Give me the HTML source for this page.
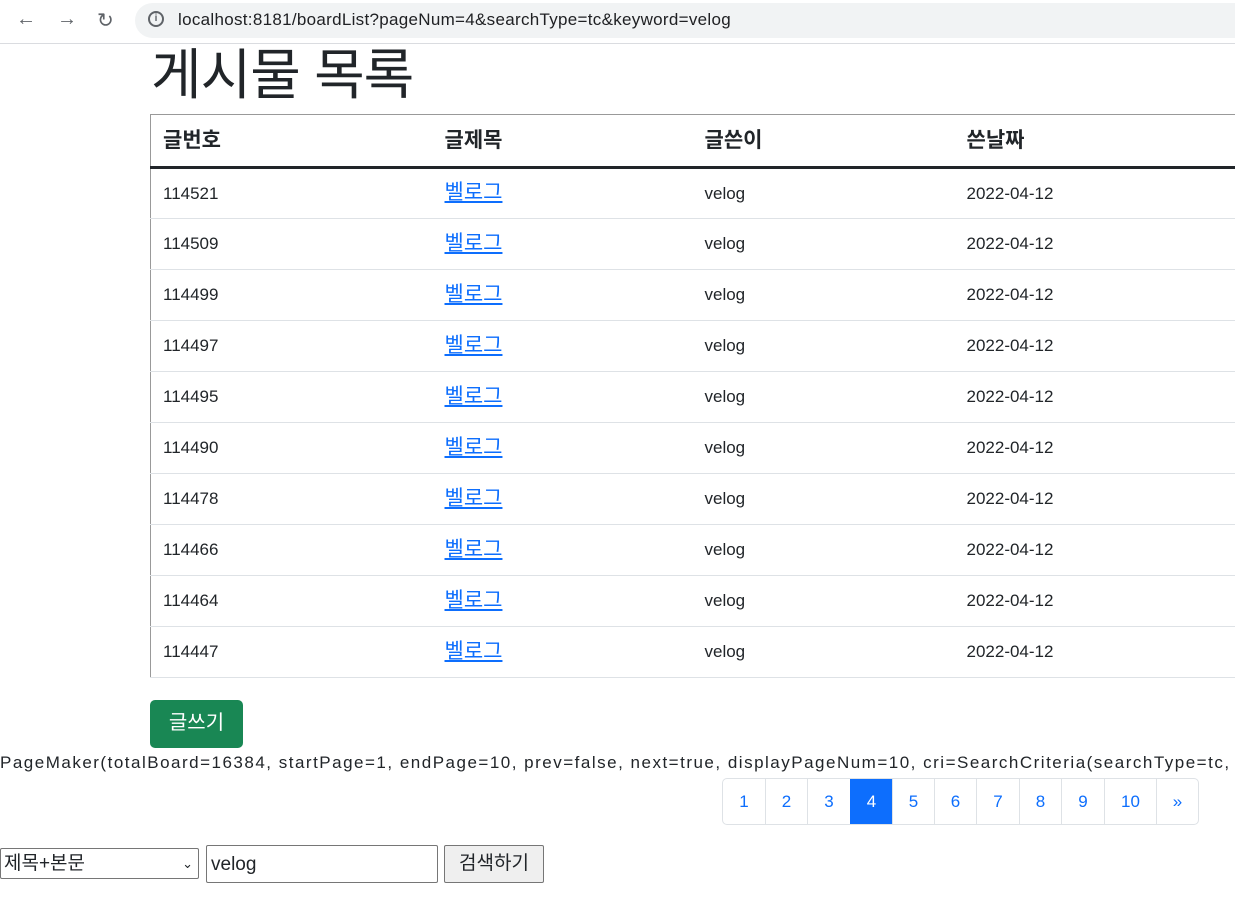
<!DOCTYPE html>
<html><head><meta charset="utf-8"><style>
*{box-sizing:border-box;margin:0;padding:0}
body{width:1235px;height:917px;overflow:hidden;background:#fff;font-family:"Liberation Sans","Noto Sans CJK KR",sans-serif;color:#212529;position:relative}
.chrome{position:absolute;left:0;top:0;width:1235px;height:44px;background:#fff;border-bottom:1px solid #dadce0}
.addr{position:absolute;left:135px;top:3px;width:1120px;height:35px;background:#f1f3f4;border-radius:18px}
.url{position:absolute;left:178px;top:10px;font-size:17px;color:#202124;letter-spacing:0.3px}
.nav{position:absolute;top:8px;font-size:20px;color:#5f6368}
h1{position:absolute;left:151px;top:44px;font-size:55px;font-weight:400;line-height:62px;letter-spacing:-1px}
table{position:absolute;left:150px;top:114px;width:1150px;border-collapse:collapse;font-size:17px;border-left:1px solid #999;border-top:1px solid #999}
th{text-align:left;height:53px;padding:0 12px;border-bottom:3px solid #212529;font-weight:700;font-size:21px;line-height:20px}
td{height:51px;padding:0 12px;border-bottom:1px solid #dee2e6}
td a{color:#0d6efd;text-decoration:underline;font-size:21px;line-height:20px}
.c1{width:282px}.c2{width:260px}.c3{width:262px}
.btn{position:absolute;left:150px;top:700px;width:93px;height:48px;background:#198754;color:#fff;border-radius:5px;font-size:20px;text-align:center;line-height:46px}
.pm{position:absolute;left:0;top:753px;font-size:17px;white-space:nowrap;letter-spacing:1.5px}
.pg{position:absolute;left:722px;top:778px;height:47px;display:flex;border:1px solid #dee2e6;border-radius:5px;overflow:hidden}
.pg div{border-left:1px solid #dee2e6;color:#0d6efd;font-size:17px;display:flex;align-items:center;justify-content:center}
.pg div:first-child{border-left:none}
.pg .a{background:#0d6efd;color:#fff;border-color:#0d6efd}
.sel{position:absolute;left:0;top:848px;width:199px;height:31px;border:1px solid #767676;border-radius:2px;font-size:19px;padding-left:3px;line-height:29px}
.inp{position:absolute;left:206px;top:845px;width:232px;height:38px;border:1px solid #767676;border-radius:2px;font-size:19px;padding-left:4px;line-height:38px}
.sb{position:absolute;left:444px;top:845px;width:100px;height:38px;border:1px solid #767676;border-radius:2px;background:#efefef;font-size:19px;text-align:center;line-height:36px}
</style></head><body>
<div class="chrome">
<span class="nav" style="left:16px">←</span><span class="nav" style="left:57px">→</span><span class="nav" style="left:97px">↻</span>
<div class="addr"></div>
<span style="position:absolute;left:148px;top:11px;width:16px;height:16px;border:2px solid #5f6368;border-radius:50%;font-size:10px;text-align:center;line-height:12px;color:#5f6368;font-weight:bold">i</span>
<span class="url">localhost:8181/boardList?pageNum=4&amp;searchType=tc&amp;keyword=velog</span>
</div>
<h1>게시물 목록</h1>
<table>
<tr><th class="c1">글번호</th><th class="c2">글제목</th><th class="c3">글쓴이</th><th>쓴날짜</th></tr>
<tr><td>114521</td><td><a>벨로그</a></td><td>velog</td><td>2022-04-12</td></tr>
<tr><td>114509</td><td><a>벨로그</a></td><td>velog</td><td>2022-04-12</td></tr>
<tr><td>114499</td><td><a>벨로그</a></td><td>velog</td><td>2022-04-12</td></tr>
<tr><td>114497</td><td><a>벨로그</a></td><td>velog</td><td>2022-04-12</td></tr>
<tr><td>114495</td><td><a>벨로그</a></td><td>velog</td><td>2022-04-12</td></tr>
<tr><td>114490</td><td><a>벨로그</a></td><td>velog</td><td>2022-04-12</td></tr>
<tr><td>114478</td><td><a>벨로그</a></td><td>velog</td><td>2022-04-12</td></tr>
<tr><td>114466</td><td><a>벨로그</a></td><td>velog</td><td>2022-04-12</td></tr>
<tr><td>114464</td><td><a>벨로그</a></td><td>velog</td><td>2022-04-12</td></tr>
<tr><td>114447</td><td><a>벨로그</a></td><td>velog</td><td>2022-04-12</td></tr>
</table>
<div class="btn">글쓰기</div>
<div class="pm">PageMaker(totalBoard=16384, startPage=1, endPage=10, prev=false, next=true, displayPageNum=10, cri=SearchCriteria(searchType=tc,</div>
<div class="pg">
<div style="width:42px">1</div><div style="width:42px">2</div><div style="width:43px">3</div><div class="a" style="width:42px">4</div><div style="width:42px">5</div><div style="width:42px">6</div><div style="width:43px">7</div><div style="width:42px">8</div><div style="width:43px">9</div><div style="width:52px">10</div><div style="width:42px">»</div>
</div>
<div class="sel">제목+본문<span style="position:absolute;right:5px;top:0;font-size:13px">⌄</span></div>
<div class="inp">velog</div>
<div class="sb">검색하기</div>
</body></html>
